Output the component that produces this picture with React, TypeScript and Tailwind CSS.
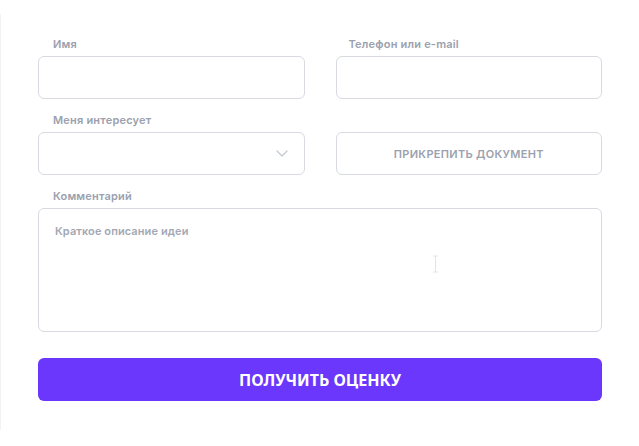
import React from "react";

const labelCls =
  "block pl-[15px] h-[14px] leading-[14px] mb-[5px] text-[11px] font-semibold tracking-[0.2px] text-[#9ba1ae] font-['Inter',sans-serif]";
const boxCls =
  "h-[43px] w-full rounded-[6px] border border-[#d7dae1] bg-white";

export default function App() {
  return (
    <div className="w-[639px] h-[446px] bg-white relative">
      <div className="absolute left-0 top-[14px] h-[416px] w-px bg-[#f2f2f4]" />
      <div className="pl-[38px] pr-[37px] pt-[37px] font-['Inter',sans-serif]">
        <div className="grid grid-cols-2 gap-x-[31px]">
          <div>
            <label className={labelCls}>Имя</label>
            <div className={boxCls} />
          </div>
          <div>
            <label className={labelCls + " !pl-[13px]"}>Телефон или e-mail</label>
            <div className={boxCls} />
          </div>
          <div className="mt-[14px]">
            <label className={labelCls}>Меня интересует</label>
            <div className={boxCls + " flex items-center justify-end pr-[16px]"}>
              <svg width="12" height="7" viewBox="0 0 12 7" fill="none">
                <path d="M1 1l5 5 5-5" stroke="#c3c7cf" strokeWidth="1.2" strokeLinecap="round" strokeLinejoin="round" />
              </svg>
            </div>
          </div>
          <div className="mt-[14px]">
            <div className="h-[14px] mb-[5px]" />
            <div className={boxCls + " flex items-center justify-center"}>
              <span className="text-[11px] leading-[14px] font-semibold text-[#9ba1ae] tracking-[0.3px]">
                ПРИКРЕПИТЬ ДОКУМЕНТ
              </span>
            </div>
          </div>
        </div>
        <div className="mt-[14px]">
          <label className={labelCls}>Комментарий</label>
          <div className="relative h-[124px] w-full rounded-[6px] border border-[#d7dae1] bg-white pl-[16px] pt-[15px]">
            <span className="block text-[11px] leading-[14px] font-semibold tracking-[0.1px] text-[#a3a8b4]">
              Краткое описание идеи
            </span>
            <svg className="absolute left-[393px] top-[46px]" width="7" height="18" viewBox="0 0 7 18" fill="none">
              <path d="M1 1h5M3.5 1v16M1 17h5" stroke="#e4e4e6" strokeWidth="1" />
            </svg>
          </div>
        </div>
        <button className="mt-[26px] h-[43px] w-full rounded-[6px] bg-[#6b37fc] flex items-center justify-center">
          <span className="text-white text-[16px] leading-[20px] font-bold tracking-[0px] font-['Noto_Sans',sans-serif]">
            ПОЛУЧИТЬ ОЦЕНКУ
          </span>
        </button>
      </div>
    </div>
  );
}
